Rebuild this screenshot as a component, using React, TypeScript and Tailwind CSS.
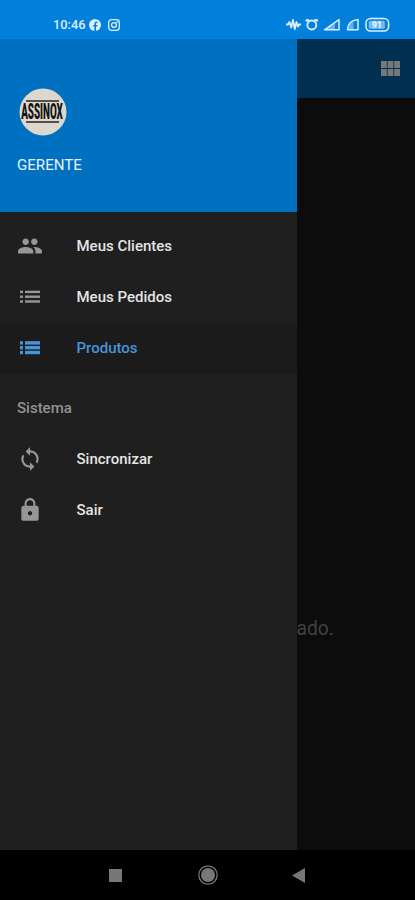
import type { ReactNode } from "react";
import { MdLock, MdPeople, MdSync } from "react-icons/md";

function ListIcon({ bar }: { bar: number }) {
  return (
    <svg width="20" height="14" viewBox="0 0 20 14" fill="currentColor">
      {[1.9, 6.7, 11.5].map((y) => (
        <g key={y}>
          <rect x="0" y={y - bar / 2} width="3" height={bar} />
          <rect x="5" y={y - bar / 2} width="15" height={bar} />
        </g>
      ))}
    </svg>
  );
}

function GridIcon() {
  return (
    <svg width="19" height="15" viewBox="0 0 19 15" fill="currentColor">
      {[0, 6.6, 13.2].map((x) => (
        <g key={x}>
          <rect x={x} y="0" width="5.8" height="7" />
          <rect x={x} y="8" width="5.8" height="7" />
        </g>
      ))}
    </svg>
  );
}

type Item = { label: string; icon: ReactNode; active?: boolean };

const mainItems: Item[] = [
  { label: "Meus Clientes", icon: <MdPeople size={26} /> },
  { label: "Meus Pedidos", icon: <ListIcon bar={2.4} /> },
  { label: "Produtos", icon: <ListIcon bar={3.4} />, active: true },
];

const systemItems: Item[] = [
  { label: "Sincronizar", icon: <MdSync size={26} /> },
  { label: "Sair", icon: <MdLock size={26} /> },
];

function MenuItem({ label, icon, active }: Item) {
  return (
    <div
      className={`flex h-[51px] items-center pl-4 ${
        active ? "bg-[#1b1b1b] text-[#4795d9]" : "text-[#e4e4e4]"
      }`}
    >
      <span
        className={`flex w-7 justify-center ${active ? "" : "text-[#969696]"}`}
      >
        {icon}
      </span>
      <span className="ml-[32.5px] pt-px text-[15px] font-medium">{label}</span>
    </div>
  );
}

function StatusBar() {
  return (
    <div className="flex h-[39px] items-center justify-between bg-[#0280dc] pt-[10px] pr-[25px] pl-[53px] text-[#dcefff]">
      <div className="flex items-center">
        <span className="w-[32px] text-[12.8px] font-medium whitespace-nowrap">
          10:46
        </span>
        <svg className="ml-[4px]" width="12" height="12" viewBox="0 0 12 12">
          <circle cx="6" cy="6" r="6" fill="currentColor" />
          <path
            d="M6.2 12V5.2Q6.2 3.2 8.5 3.3M4.2 6.8H8.4"
            fill="none"
            stroke="#0280dc"
            strokeWidth="1.6"
          />
        </svg>
        <svg
          className="ml-[7px]"
          width="12"
          height="12"
          viewBox="0 0 12 12"
          fill="none"
          stroke="currentColor"
          strokeWidth="1.3"
        >
          <rect x="0.7" y="0.7" width="10.6" height="10.6" rx="2.8" />
          <circle cx="6" cy="6" r="2.4" />
          <circle cx="8.9" cy="3.1" r="0.3" />
        </svg>
      </div>
      <svg
        width="104"
        height="16"
        viewBox="0 0 104 16"
        fill="none"
        stroke="currentColor"
        strokeWidth="1.5"
        strokeLinejoin="round"
      >
        <path
          d="M0 7.5H2L3.5 5L5.2 10.5L7 3L8.8 12L10.5 5L12 9.5L13 7.5H15"
          strokeWidth="1.8"
        />
        <circle cx="25.8" cy="8" r="4.5" strokeWidth="1.8" />
        <path d="M19.6 3.3H23.4M28.2 3.3H32" strokeWidth="2.2" />
        <path d="M38.5 12.8L53 2.6V12.8Z" />
        <path
          d="M45.5 8.5L49 6V12.2H40.5Z"
          fill="currentColor"
          stroke="none"
          opacity="0.45"
        />
        <path d="M61.5 12.8Q61.5 4 72 2.6V12.8Z" />
        <path
          d="M62 12.2Q62 7.5 67.5 4.8V12.2Z"
          fill="currentColor"
          stroke="none"
          opacity="0.45"
        />
        <rect x="80" y="1.4" width="22.6" height="12.6" rx="4.5" />
        <rect
          x="82.8"
          y="3.8"
          width="16"
          height="8"
          rx="1.5"
          fill="currentColor"
          stroke="none"
          opacity="0.55"
        />
        <text
          x="91"
          y="10.8"
          textAnchor="middle"
          fill="#f2faff"
          stroke="none"
          fontSize="8.5"
          fontWeight="700"
        >
          91
        </text>
      </svg>
    </div>
  );
}

function Logo() {
  return (
    <div className="relative h-12 w-12">
      <svg width="48" height="48" viewBox="0 0 48 48">
        <circle cx="24" cy="24" r="23.5" fill="#ddd8cf" />
        <path d="M7 13H40M7 34H40" stroke="#28241f" strokeWidth="1.4" />
      </svg>
      <span className="absolute inset-0 flex scale-y-[2.3] items-center justify-center pr-[2px] text-[9.8px] leading-none font-black text-[#15130f]">
        ASSINOX
      </span>
    </div>
  );
}

function Drawer() {
  return (
    <aside className="flex w-[296.5px] shrink-0 flex-col bg-[#1f1f1f]">
      <header className="h-[173px] bg-[#0070c0] pt-[49px] pl-[17px] text-[#e8f3fc]">
        <div className="ml-[2px]">
          <Logo />
        </div>
        <div className="mt-[18px] text-[15.1px] leading-[22px]">GERENTE</div>
      </header>
      <nav className="pt-[8.5px]">
        {mainItems.map((item) => (
          <MenuItem key={item.label} {...item} />
        ))}
        <div className="flex h-[60px] items-center pt-[10px] pl-[17px] text-[15px] font-medium text-[#929292]">
          Sistema
        </div>
        {systemItems.map((item) => (
          <MenuItem key={item.label} {...item} />
        ))}
      </nav>
    </aside>
  );
}

export default function App() {
  return (
    <div className="flex h-[900px] w-[415px] flex-col overflow-hidden bg-black font-['Roboto',sans-serif]">
      <StatusBar />
      <div className="flex h-[811px]">
        <Drawer />
        <main className="flex-1 bg-[#0c0c0c]">
          <div className="flex h-[59px] items-center justify-end bg-[#002f50] pr-[15px] text-[#75797c]">
            <GridIcon />
          </div>
          <div className="pt-[517px] text-[19.3px] leading-[28px] text-[#424242]">
            ado.
          </div>
        </main>
      </div>
      <div className="flex flex-1 items-center bg-black pl-[109px] text-[#777777]">
        <svg width="13" height="13" viewBox="0 0 13 13" fill="currentColor">
          <rect width="13" height="13" />
        </svg>
        <svg
          className="ml-[76px]"
          width="20"
          height="20"
          viewBox="0 0 20 20"
          fill="currentColor"
        >
          <circle cx="10" cy="10" r="7" />
          <circle
            cx="10"
            cy="10"
            r="9.2"
            fill="none"
            stroke="currentColor"
            strokeWidth="1.3"
          />
        </svg>
        <svg
          className="ml-[74px]"
          width="13"
          height="15"
          viewBox="0 0 13 15"
          fill="currentColor"
        >
          <path d="M0 7.5L13 0V15Z" />
        </svg>
      </div>
    </div>
  );
}
